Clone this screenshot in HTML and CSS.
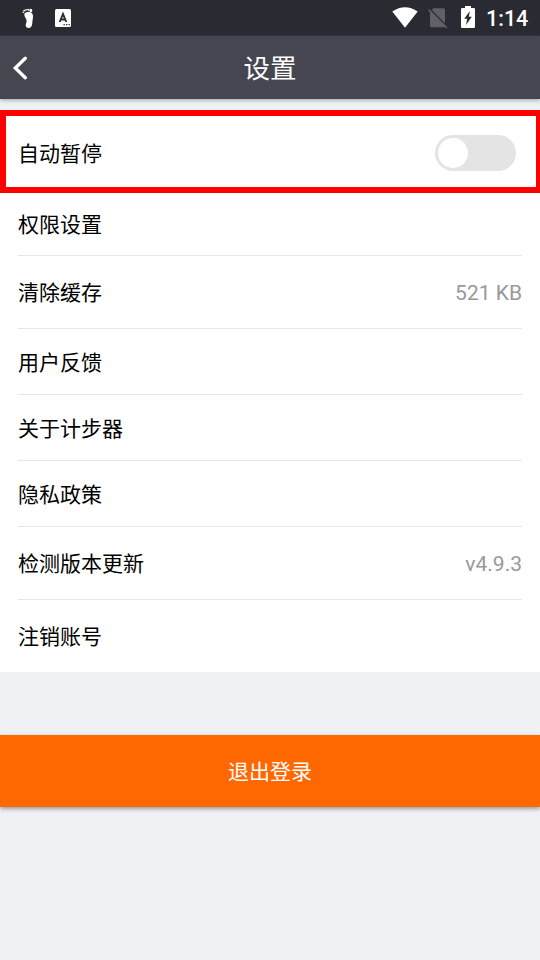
FILE: index.html
```html
<!DOCTYPE html>
<html lang="zh-CN">
<head>
<meta charset="utf-8">
<title>设置</title>
<link rel="stylesheet" href="styles.css">
</head>
<body>
<div class="status">
  <svg class="foot" width="14" height="22" viewBox="0 0 14 22" fill="#fff"><path d="M2.800 5C5 3.600 9.500 3.500 10.500 6C11.500 8.500 10.800 10 10.500 13C10.200 16 10 19 8 19.700C6 20.500 3.500 19.500 3.700 17C3.800 15 5 14 4.500 12C4 10 1.300 7.500 2.800 5Z"/><ellipse cx="8.800" cy="2.500" rx="1.500" ry="1.800"/><circle cx="6.200" cy="1.800" r="1"/><circle cx="4" cy="1.800" r=".9"/><circle cx="2.200" cy="2.700" r=".9"/><circle cx="1.300" cy="4.300" r=".8"/></svg>
  <svg class="letter" width="16" height="18" viewBox="0 0 16 18"><rect width="16" height="18" rx="1.500" fill="#fff"/><path d="M4.700 13 8 5 11.300 13M5.900 10.500H10.100" fill="none" stroke="#2a2a32" stroke-width="1.900"/><path d="M8.500 15h1.300v1.300H8.500zM11 15h1.300v1.300H11zM13.500 15h1.300v1.300h-1.300z" fill="#2a2a32"/></svg>
  <svg class="wifi" width="26" height="21" viewBox="0 0 26 21"><path d="M.3 4.500Q13-4 25.700 4.500L13 20.800Z" fill="#fff"/></svg>
  <svg class="sim" width="20" height="21" viewBox="0 0 20 21"><path d="M5 .3H15.500Q17 .3 17 1.800V15.300L4 2.300ZM2 3.500 17 18.500Q16.700 19.200 15.500 19.200H3.500Q2 19.200 2 17.700Z" fill="#606066"/><path d="M.7 1.800 18.700 19.800" stroke="#606066" stroke-width="1.800"/></svg>
  <svg class="battery" width="14" height="22" viewBox="0 0 14 22"><path d="M4 0H10V2H12.700Q14 2 14 3.300V20.700Q14 22 12.700 22H1.300Q0 22 0 20.700V3.300Q0 2 1.300 2H4Z" fill="#fff"/><path d="M8.900 5 3.200 12.700H6.200L5 19 10.800 10.800H7.800Z" fill="#2a2a32"/></svg>
  <span class="time">1:14</span>
</div>
<header class="bar">
  <svg class="back" width="16" height="24" viewBox="0 0 16 24"><path d="M13.300 2.300 3.300 12 13.300 21.700" fill="none" stroke="#fff" stroke-width="3.300" stroke-linecap="round"/></svg>
  <h1>设置</h1>
</header>
<main>
  <div class="row marked"><span>自动暂停</span><div class="toggle"><div class="knob"></div></div></div>
  <ul class="list">
    <li class="row permission"><span>权限设置</span></li>
    <li class="row tall"><span>清除缓存</span><span class="value">521 KB</span></li>
    <li class="row"><span>用户反馈</span></li>
    <li class="row"><span>关于计步器</span></li>
    <li class="row"><span>隐私政策</span></li>
    <li class="row tall"><span>检测版本更新</span><span class="value">v4.9.3</span></li>
    <li class="row last"><span>注销账号</span></li>
  </ul>
  <button class="logout">退出登录</button>
</main>
</body>
</html>
```

FILE: styles.css
```css
* { box-sizing: border-box; }
body {
  margin: 0;
  height: 960px;
  overflow: hidden;
  background: #eff1f4;
  color: #000;
  font-family: Roboto, "Noto Sans CJK SC", sans-serif;
  font-size: 21px;
}
svg { display: block; flex: none; }
.status {
  height: 36px;
  display: flex;
  align-items: flex-start;
  background: #2a2a32;
  color: #fff;
}
.foot { margin: 8px 0 0 22px; }
.letter { margin: 9px 0 0 19px; }
.wifi { margin: 7px 0 0 321px; }
.sim { margin: 8px 0 0 10px; }
.battery { margin: 6px 0 0 13px; }
.time {
  margin: 6px 0 0 11px;
  font-size: 21.5px;
  font-weight: 500;
  line-height: 26px;
}
.bar {
  height: 63px;
  display: flex;
  align-items: center;
  background: #464650;
  color: #fff;
  box-shadow: 0 1px 4px rgba(70, 110, 130, .6);
}
.back { margin-left: 12px; }
h1 {
  flex: 1;
  margin: 0 28px 0 0;
  padding-bottom: 2px;
  text-align: center;
  font-size: 26.5px;
  font-weight: 400;
}
main { padding-top: 11px; }
.list {
  margin: 0;
  padding: 0 18px;
  list-style: none;
  background: #fff;
}
.row {
  height: 66px;
  display: flex;
  align-items: center;
  justify-content: space-between;
  border-bottom: 1px solid #e6e6e6;
}
.row > span { padding-bottom: 2px; }
.row > .value {
  padding: 2px 0 0;
  color: #999;
}
.row.marked {
  height: 83px;
  padding: 2px 20px 0 12px;
  border: 6px solid #f00;
  border-right-width: 4px;
  background: #fff;
}
.permission { height: 63px; padding-bottom: 1px; }
.tall { height: 73px; }
.last { height: 72px; border: 0; }
.toggle {
  width: 81px;
  height: 36px;
  padding: 3px;
  border-radius: 18px;
  background: #e4e4e4;
}
.knob {
  width: 30px;
  height: 30px;
  border-radius: 50%;
  background: #fff;
}
.logout {
  display: block;
  width: 100%;
  height: 72px;
  margin-top: 63px;
  padding: 0 0 2px;
  border: 0;
  background: #ff6700;
  color: #fff;
  font: inherit;
  box-shadow: 0 2px 4px rgba(0, 0, 0, .35);
}
```
